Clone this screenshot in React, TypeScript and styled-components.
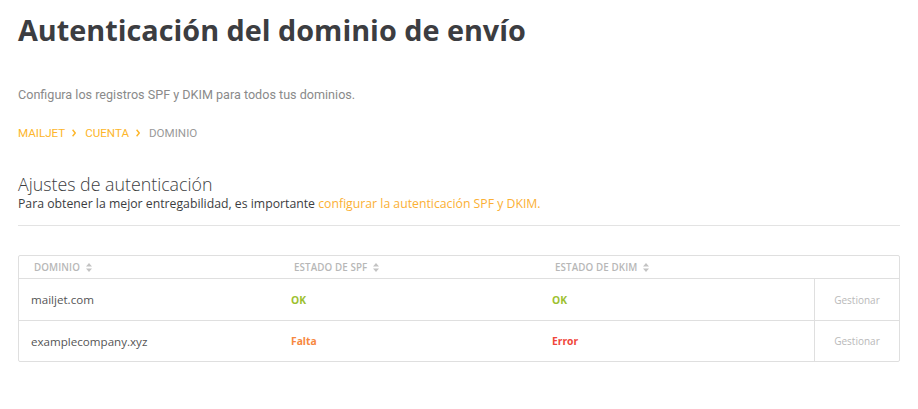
import React from "react";
import styled, { createGlobalStyle } from "styled-components";

const Global = createGlobalStyle`
  html, body { margin: 0; padding: 0; background: #fff; }
  body { font-family: "Open Sans", "Noto Sans", sans-serif; }
  * { box-sizing: border-box; }
`;

const Page = styled.div`
  padding: 8px 18px 0 18px;
  width: 918px;
`;

const Title = styled.h1`
  margin: 0;
  font-family: "Open Sans", sans-serif;
  font-weight: 700;
  font-size: 28.8px;
  line-height: 44px;
  color: #3c3d41;
`;

const Description = styled.p`
  margin: 34px 0 0 0;
  font-family: Roboto, sans-serif;
  font-size: 12.6px;
  line-height: 18px;
  color: #8a8a8a;
`;

const Crumbs = styled.nav`
  display: flex;
  align-items: center;
  margin-top: 21px;
  font-family: Roboto, sans-serif;
  font-size: 11.6px;
  line-height: 16px;
  text-transform: uppercase;
`;

const Crumb = styled.span<{ $active?: boolean }>`
  color: ${(p) => (p.$active ? "#9a9a9a" : "#fdb62a")};
`;

const Chevron = styled.svg`
  margin: 0 9px 0 7px;
  display: block;
`;

const SectionTitle = styled.h2`
  margin: 32px 0 0 0;
  font-family: "Open Sans", sans-serif;
  font-weight: 300;
  font-size: 17.8px;
  line-height: 22px;
  color: #3c3d41;
`;

const Lead = styled.p`
  margin: 1px 0 0 0;
  font-size: 12.25px;
  line-height: 16px;
  color: #3c3d41;
`;

const Link = styled.a`
  color: #fbb034;
  text-decoration: none;
`;

const Rule = styled.hr`
  margin: 13px 0 0 0;
  border: 0;
  border-top: 1px solid #e3e3e3;
  width: 882px;
`;

const Table = styled.div`
  margin-top: 29px;
  width: 882px;
  border: 1px solid #dfdfdf;
  border-radius: 2px;
`;

const Row = styled.div<{ $head?: boolean }>`
  display: grid;
  grid-template-columns: 260px 261px 274px 1fr;
  height: ${(p) => (p.$head ? "22px" : "42px")};
  border-top: ${(p) => (p.$head ? "none" : "1px solid #dfdfdf")};
  align-items: stretch;
  &:last-child { height: 41px; }
`;

const HeadCell = styled.div`
  display: flex;
  align-items: center;
  gap: 6px;
  padding-left: 15px;
  font-size: 9.8px;
  font-weight: 600;
  color: #b7b7b7;
  text-transform: uppercase;
  letter-spacing: 0.1px;
`;

const Cell = styled.div`
  display: flex;
  align-items: center;
  padding-left: 12px;
  font-size: 11.6px;
  color: #555;
`;

const Status = styled.span<{ $tone: "ok" | "warn" | "err" }>`
  font-size: 10.3px;
  font-weight: 700;
  color: ${(p) =>
    p.$tone === "ok" ? "#9cc130" : p.$tone === "warn" ? "#f7883e" : "#f0463b"};
`;

const ActionCell = styled.div`
  display: flex;
  align-items: center;
  justify-content: center;
  border-left: 1px solid #dfdfdf;
  font-size: 10px;
  color: #b9b9b9;
`;

const SortIcon = () => (
  <svg width="6" height="9" viewBox="0 0 6 9">
    <path d="M3 0 L6 3.5 L0 3.5 Z M3 9 L6 5.5 L0 5.5 Z" fill="#c3c3c3" />
  </svg>
);

const Sep = () => (
  <Chevron width="4" height="8" viewBox="0 0 4 8">
    <path d="M0.6 0.8 L3.2 4 L0.6 7.2" fill="none" stroke="#fdb62a" strokeWidth="1.4" />
  </Chevron>
);

type Tone = "ok" | "warn" | "err";
const rows: { domain: string; spf: [string, Tone]; dkim: [string, Tone] }[] = [
  { domain: "mailjet.com", spf: ["OK", "ok"], dkim: ["OK", "ok"] },
  { domain: "examplecompany.xyz", spf: ["Falta", "warn"], dkim: ["Error", "err"] },
];

export default function App() {
  return (
    <Page>
      <Global />
      <Title>Autenticación del dominio de envío</Title>
      <Description>Configura los registros SPF y DKIM para todos tus dominios.</Description>
      <Crumbs>
        <Crumb>Mailjet</Crumb>
        <Sep />
        <Crumb>Cuenta</Crumb>
        <Sep />
        <Crumb $active>Dominio</Crumb>
      </Crumbs>
      <SectionTitle>Ajustes de autenticación</SectionTitle>
      <Lead>
        Para obtener la mejor entregabilidad, es importante{" "}
        <Link href="#">configurar la autenticación SPF y DKIM.</Link>
      </Lead>
      <Rule />
      <Table>
        <Row $head>
          <HeadCell>Dominio <SortIcon /></HeadCell>
          <HeadCell>Estado de SPF <SortIcon /></HeadCell>
          <HeadCell>Estado de DKIM <SortIcon /></HeadCell>
          <div />
        </Row>
        {rows.map((r) => (
          <Row key={r.domain}>
            <Cell>{r.domain}</Cell>
            <Cell><Status $tone={r.spf[1]}>{r.spf[0]}</Status></Cell>
            <Cell><Status $tone={r.dkim[1]}>{r.dkim[0]}</Status></Cell>
            <ActionCell>Gestionar</ActionCell>
          </Row>
        ))}
      </Table>
    </Page>
  );
}
